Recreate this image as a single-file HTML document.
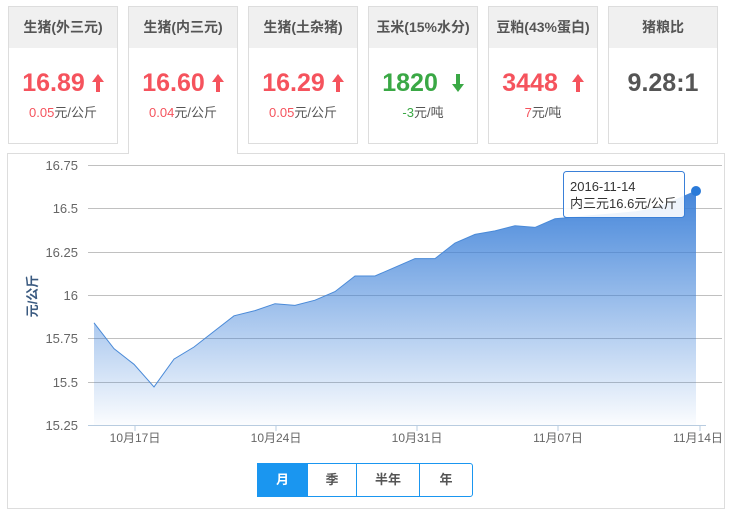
<!DOCTYPE html>
<html><head><meta charset="utf-8"><style>
*{margin:0;padding:0;box-sizing:border-box}
body{width:729px;height:514px;background:#fff;font-family:"Liberation Sans","Noto Sans CJK SC",sans-serif;position:relative;overflow:hidden}
.card{position:absolute;top:6px;width:110px;height:138px;border:1px solid #ddd;background:#fff;text-align:center}
.card .h{height:41px;background:#f0f0f0;line-height:41px;font-size:14px;font-weight:bold;color:#555}
.card .v{margin-top:21px;font-size:25px;font-weight:bold;line-height:28px}
.card .s{margin-top:5px;font-size:13px;color:#555}
.card svg{vertical-align:-1px}
.r{color:#f5535d}.g{color:#3aa845}
.sel{height:148px;border-bottom:none;z-index:2}
.panel{position:absolute;left:7px;top:153px;width:718px;height:356px;border:1px solid #ddd}
.btns{position:absolute;left:257px;top:463px;height:34px;display:flex;border:1px solid #1a96f0;border-radius:0 3px 3px 0}
.btns div{height:32px;line-height:32px;text-align:center;font-size:13px;font-weight:bold;color:#555;border-left:1px solid #1a96f0}
</style></head><body>
<div class="card" style="left:8px"><div class="h">生猪(外三元)</div><div class="v r">16.89 <svg width="12" height="18" viewBox="0 0 12 18"><path d="M6,0 L12,8 L8,8 L8,18 L4,18 L4,8 L0,8Z" fill="#f5535d"/></svg></div><div class="s"><span class="r">0.05</span>元/公斤</div></div>
<div class="panel"></div>
<div class="card sel" style="left:128px"><div class="h">生猪(内三元)</div><div class="v r">16.60 <svg width="12" height="18" viewBox="0 0 12 18"><path d="M6,0 L12,8 L8,8 L8,18 L4,18 L4,8 L0,8Z" fill="#f5535d"/></svg></div><div class="s"><span class="r">0.04</span>元/公斤</div></div>
<div class="card" style="left:248px"><div class="h">生猪(土杂猪)</div><div class="v r">16.29 <svg width="12" height="18" viewBox="0 0 12 18"><path d="M6,0 L12,8 L8,8 L8,18 L4,18 L4,8 L0,8Z" fill="#f5535d"/></svg></div><div class="s"><span class="r">0.05</span>元/公斤</div></div>
<div class="card" style="left:368px"><div class="h">玉米(15%水分)</div><div class="v g">1820 &nbsp;<svg width="12" height="18" viewBox="0 0 12 18"><path d="M6,18 L12,10 L8,10 L8,0 L4,0 L4,10 L0,10Z" fill="#3aa845"/></svg></div><div class="s"><span class="g">-3</span>元/吨</div></div>
<div class="card" style="left:488px"><div class="h">豆粕(43%蛋白)</div><div class="v r">3448 &nbsp;<svg width="12" height="18" viewBox="0 0 12 18"><path d="M6,0 L12,8 L8,8 L8,18 L4,18 L4,8 L0,8Z" fill="#f5535d"/></svg></div><div class="s"><span class="r">7</span>元/吨</div></div>
<div class="card" style="left:608px"><div class="h">猪粮比</div><div class="v" style="color:#555">9.28:1</div></div>
<svg style="position:absolute;left:0;top:0" width="729" height="514" font-family="Liberation Sans, Noto Sans CJK SC, sans-serif">
<defs><linearGradient id="gr" x1="0" y1="0" x2="0" y2="1"><stop offset="0" stop-color="#3a7fd8" stop-opacity="0.95"/><stop offset="1" stop-color="#3a7fd8" stop-opacity="0.02"/></linearGradient></defs>
<g stroke="#c0c0c0" stroke-width="1">
<line x1="88" y1="165.5" x2="722" y2="165.5"/><line x1="88" y1="208.5" x2="722" y2="208.5"/><line x1="88" y1="252.5" x2="722" y2="252.5"/><line x1="88" y1="295.5" x2="722" y2="295.5"/><line x1="88" y1="338.5" x2="722" y2="338.5"/><line x1="88" y1="382.5" x2="722" y2="382.5"/></g>
<path d="M94,322.8 L114,348.7 134,364.3 154,386.9 174,359.1 194,347 214,331.4 234,315.8 255,310.6 275,303.7 295,305.4 315,300.2 335,291.6 355,276 375,276 395,267.3 415,258.6 435,258.6 455,243 475,234.4 495,230.9 515,225.7 535,227.4 555,218.8 576,217 596,215.3 616,213.6 636,211.8 656,208.4 676,199.7 696,191 L696,425 94,425Z" fill="url(#gr)"/>
<path d="M94,322.8 L114,348.7 134,364.3 154,386.9 174,359.1 194,347 214,331.4 234,315.8 255,310.6 275,303.7 295,305.4 315,300.2 335,291.6 355,276 375,276 395,267.3 415,258.6 435,258.6 455,243 475,234.4 495,230.9 515,225.7 535,227.4 555,218.8 576,217 596,215.3 616,213.6 636,211.8 656,208.4 676,199.7 696,191" fill="none" stroke="#4a8ad8" stroke-width="1"/>
<line x1="88" y1="425.5" x2="706" y2="425.5" stroke="#b8cce0"/>
<g stroke="#b8cce0"><line x1="135" y1="425" x2="135" y2="431"/><line x1="276" y1="425" x2="276" y2="431"/><line x1="417" y1="425" x2="417" y2="431"/><line x1="558" y1="425" x2="558" y2="431"/><line x1="700" y1="425" x2="700" y2="431"/></g>
<g font-size="13" fill="#666" text-anchor="end"><text x="78" y="170">16.75</text><text x="78" y="213">16.5</text><text x="78" y="257">16.25</text><text x="78" y="300">16</text><text x="78" y="343">15.75</text><text x="78" y="387">15.5</text><text x="78" y="430">15.25</text></g>
<g font-size="12" fill="#666" text-anchor="middle"><text x="135" y="442">10月17日</text><text x="276" y="442">10月24日</text><text x="417" y="442">10月31日</text><text x="558" y="442">11月07日</text><text x="698" y="442">11月14日</text></g>
<text transform="translate(37,296) rotate(-90)" font-size="13" font-weight="bold" fill="#3a5a80" text-anchor="middle">元/公斤</text>
<circle cx="696" cy="191" r="5" fill="#2a7ad8"/>
<rect x="563.5" y="171.5" width="121" height="46" rx="3" fill="#fff" fill-opacity="0.9" stroke="#3a80d8"/>
<text x="570" y="191" font-size="13" fill="#333">2016-11-14</text>
<text x="570" y="208" font-size="13" fill="#333">内三元16.6元/公斤</text>
</svg>
<div class="btns"><div style="width:49px;background:#1a96f0;color:#fff;border-left:none">月</div><div style="width:49px">季</div><div style="width:63px">半年</div><div style="width:53px">年</div></div>
</body></html>
